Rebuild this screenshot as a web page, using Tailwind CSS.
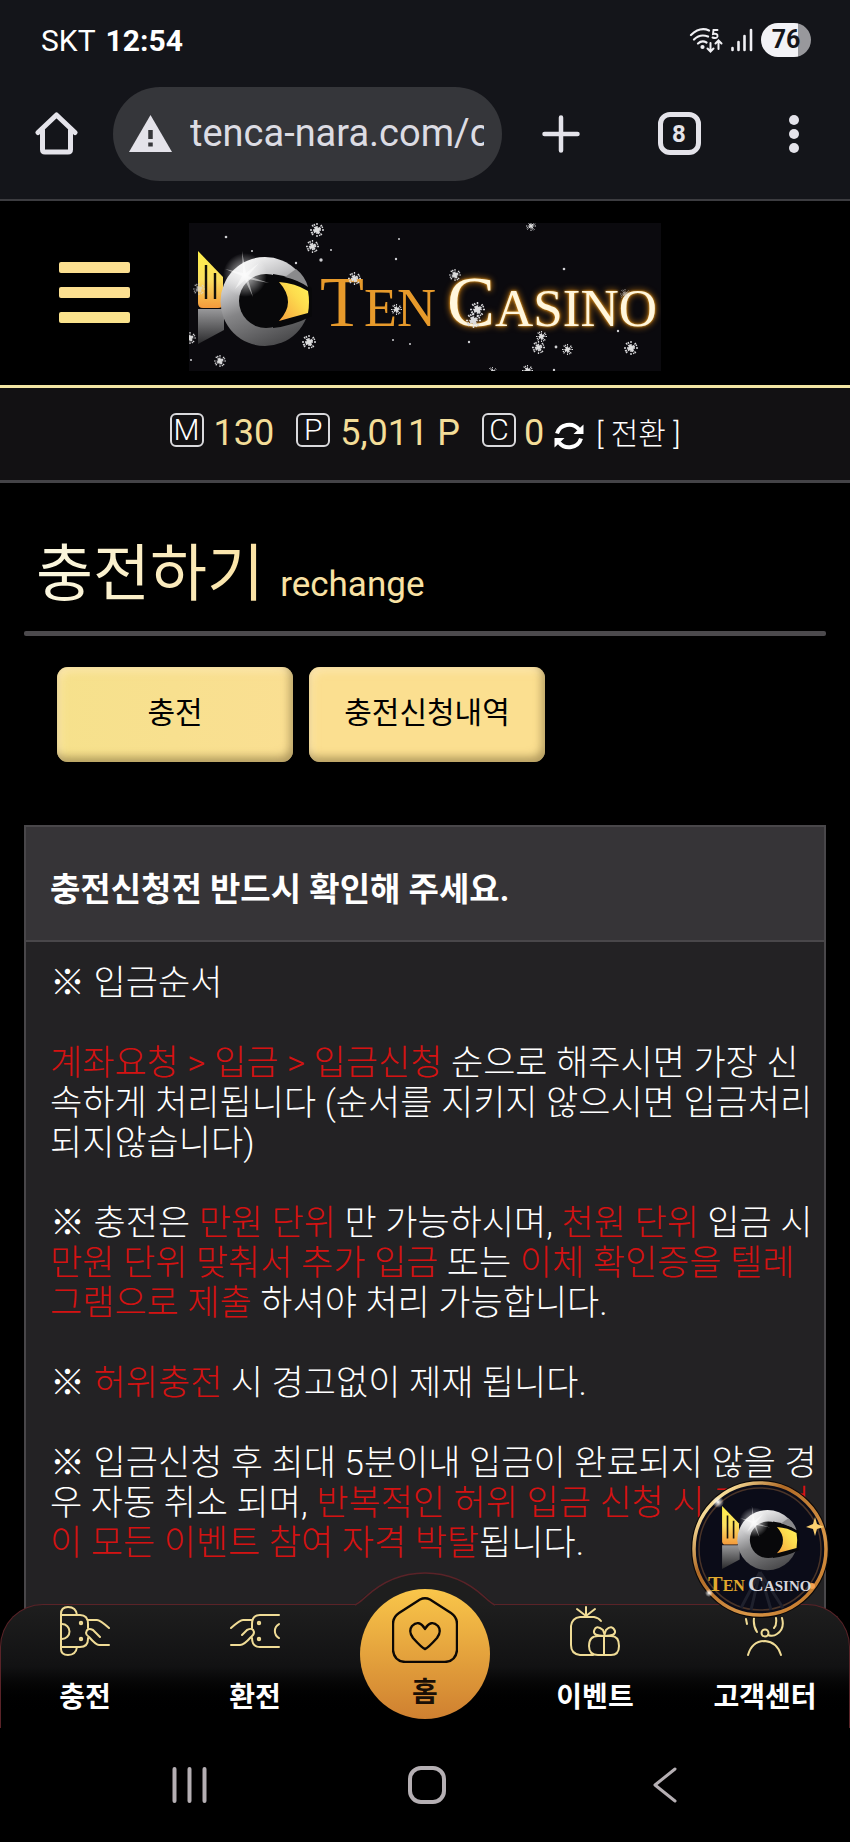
<!DOCTYPE html>
<html lang="ko">
<head>
    <meta charset="UTF-8">
    <meta name="viewport" content="width=device-width, initial-scale=1.0">
    <title>TEN CASINO - 충전하기</title>
    <script src="https://cdn.jsdelivr.net/npm/@tailwindcss/browser@4"></script>
</head>
<body class="bg-black text-white h-screen flex flex-col overflow-hidden font-['Roboto','Noto_Sans_CJK_KR',sans-serif]">

    <!-- shared drawings -->
    <svg class="absolute w-0 h-0" aria-hidden="true">
        <defs>
            <linearGradient id="wing" x1="0" y1="0" x2="0" y2="1">
                <stop offset="0" stop-color="#fff04a"/><stop offset="0.5" stop-color="#fbe060"/><stop offset="1" stop-color="#f49a3c"/>
            </linearGradient>
            <linearGradient id="ring" x1="0.2" y1="0" x2="0.6" y2="1">
                <stop offset="0" stop-color="#ffffff"/><stop offset="0.3" stop-color="#c4c4c6"/><stop offset="0.55" stop-color="#858587"/><stop offset="1" stop-color="#4a4a4c"/>
            </linearGradient>
            <linearGradient id="eye" x1="0" y1="1" x2="1" y2="0">
                <stop offset="0" stop-color="#f7a03c"/><stop offset="0.6" stop-color="#fddc4e"/><stop offset="1" stop-color="#fff45a"/>
            </linearGradient>
            <linearGradient id="tail" x1="0" y1="0" x2="0" y2="1">
                <stop offset="0" stop-color="#98989a"/><stop offset="1" stop-color="#2a2a2c"/>
            </linearGradient>
            <radialGradient id="glow">
                <stop offset="0" stop-color="#fff"/><stop offset="0.3" stop-color="#fff" stop-opacity="0.7"/><stop offset="1" stop-color="#fff" stop-opacity="0"/>
            </radialGradient>
            <linearGradient id="rim" x1="0" y1="0" x2="1" y2="1">
                <stop offset="0" stop-color="#c07a2c"/><stop offset="0.15" stop-color="#f6dc98"/><stop offset="0.35" stop-color="#b06a26"/><stop offset="0.7" stop-color="#d89648"/><stop offset="0.85" stop-color="#c98032"/><stop offset="1" stop-color="#8a4c16"/>
            </linearGradient>
            <symbol id="mark" viewBox="0 0 130 130" overflow="visible">
                <path d="M9 28 34 54V80q0 5-5 5H14q-5 0-5-5Z" fill="url(#wing)"/>
                <path d="M17 42v34M26 50v26" stroke="#14110a" stroke-width="2.4"/>
                <path d="M9 86H35V107L9 121Z" fill="url(#tail)"/>
                <circle cx="76" cy="78.500" r="44.500" fill="url(#ring)"/>
                <path d="M84 51Q103 53 123 65V93Q103 103 84 105Z" fill="#08080a"/>
                <path d="M107 46Q116 53 119 64Q109 57 96 54Z" fill="#8a8a8c"/>
                <circle cx="77" cy="78" r="27" fill="#08080a"/>
                <path d="M90 59Q106 60 119 68Q121 79 119 90Q104 94 90 98Q108 79 90 59Z" fill="url(#eye)"/>
                <circle cx="56" cy="52" r="22" fill="url(#glow)" opacity="0.8"/>
                <path d="M53 28 57 50 70 40 59 53 80 60 59 56 64 74 56 57 46 66 53 53 36 46 54 50Z" fill="#fff" opacity="0.5"/>
            </symbol>
            <symbol id="flake" viewBox="-7 -7 14 14" overflow="visible">
                <path d="M0-7V7M-7 0H7M-5-5 5 5M-5 5 5-5M-3-6 3 6M-6 3 6-3" stroke="#d8d8da" stroke-width="1.400" stroke-dasharray="2 1"/>
                <circle r="2.500" fill="#ddd"/>
            </symbol>
        </defs>
    </svg>

    <!-- status bar -->
    <div class="h-[68px] shrink-0 bg-[#14151a] pl-[41px] pr-[39px] pt-3 flex items-center justify-between">
        <div class="text-[30px] flex gap-[10px]">
            <span>SKT</span>
            <span class="font-bold">12:54</span>
        </div>
        <div class="flex items-center gap-2">
            <svg class="w-[34px] h-[26px]" viewBox="0 0 34 26" fill="none" stroke="#f0f0f4" stroke-width="2.200" stroke-linecap="round">
                <path d="M2 8Q11-.5 20 3.500M5 12.500Q11 6.500 19 9.500M9 16.500Q13 13 17.500 15.500"/>
                <circle cx="13.500" cy="20" r="1" fill="#f0f0f4"/>
                <path d="M28.500 3H24.500L24 7Q29 6 28.500 9.500Q27.500 12 23.500 10.500" stroke-width="1.900"/>
                <path d="M21.500 16V24M18.500 21.500 21.500 24.500 24.500 21.500M29.500 22V14M26.500 16.500 29.500 13.500 32.500 16.500" stroke-width="2"/>
            </svg>
            <svg class="w-[22px] h-6" viewBox="0 0 22 24" stroke="#f0f0f4" stroke-width="2.600" stroke-linecap="round">
                <path d="M1.500 20V22M7.500 14V22M13.500 8V22"/><path d="M20 2V22"/>
            </svg>
            <span class="w-[50px] h-[34px] rounded-full bg-linear-to-r from-[#f2f2f6] from-75% to-[#98989c] to-75% text-[#14151a] text-[25px] leading-[34px] font-bold text-center">76</span>
        </div>
    </div>

    <!-- browser toolbar -->
    <div class="h-[133px] shrink-0 bg-[#14151a] border-b-2 border-[#3c3c40] pl-[35px] flex items-center">
        <button type="button" aria-label="홈페이지" class="w-[43px]">
            <svg class="w-[43px] h-[43px]" viewBox="0 0 43 43" fill="none" stroke="#e4e3ea" stroke-width="5" stroke-linecap="round" stroke-linejoin="round">
                <path d="M3 20.500 21.500 3 40 20.500M7.500 18V37.500Q7.500 40 10 40H33Q35.500 40 35.500 37.500V18"/>
            </svg>
        </button>
        <div class="ml-[35px] flex-1 min-w-0 h-[94px] rounded-full bg-[#35363a] pl-4 pr-[18px] flex items-center">
            <svg class="w-[43px] h-[37px] shrink-0" viewBox="0 0 43 37">
                <path d="M21.500 0 43 37H0Z" fill="#e4e3ea"/>
                <path d="M21.500 15V24M21.500 27.500V31.500" stroke="#35363a" stroke-width="4.500"/>
            </svg>
            <input type="text" aria-label="주소" value="tenca-nara.com/c" class="ml-[18px] flex-1 min-w-0 bg-transparent text-[38px] text-[#dcdce3] outline-none">
        </div>
        <button type="button" aria-label="새 탭" class="w-[118px] flex justify-center">
            <svg class="w-[38px] h-[38px]" viewBox="0 0 38 38" stroke="#e4e3ea" stroke-width="4.500" stroke-linecap="round"><path d="M19 2.500V35.500M2.500 19H35.500"/></svg>
        </button>
        <button type="button" aria-label="탭 목록" class="w-[118px] flex justify-center">
            <span class="w-[43px] h-[43px] rounded-xl border-[5px] border-[#e4e3ea] text-[#e4e3ea] text-2xl leading-[34px] font-bold">8</span>
        </button>
        <button type="button" aria-label="더보기" class="w-28 flex justify-center">
            <svg class="w-[10px] h-[38px]" viewBox="0 0 10 38" fill="#e4e3ea"><circle cx="5" cy="5" r="5"/><circle cx="5" cy="19" r="5"/><circle cx="5" cy="33" r="5"/></svg>
        </button>
    </div>

    <!-- page -->
    <div class="relative flex-1 min-h-0 overflow-hidden">
        <header class="relative h-[187px] pt-2 border-b-[3px] border-[#f3e6a4] flex items-center justify-center">
            <button type="button" aria-label="메뉴" class="absolute left-[59px] top-[61px] w-[71px] flex flex-col gap-[14px]">
                <span class="h-[11px] rounded-xs bg-[#fbdf90]"></span>
                <span class="h-[11px] rounded-xs bg-[#fbdf90]"></span>
                <span class="h-[11px] rounded-xs bg-[#fae28c]"></span>
            </button>
            <a href="#" aria-label="TEN CASINO" class="bg-[#0b0a0e]">
                <svg class="w-[472px] h-[148px] overflow-hidden font-['Liberation_Serif',serif]" viewBox="0 0 472 148">
                    <use href="#mark" width="130" height="130"/>
                    <text x="131" y="103" font-size="54" fill="#e79a2b"><tspan font-size="72">T</tspan>EN</text>
                    <text x="258" y="103" font-size="53" fill="#fff6dc" class="[filter:drop-shadow(0_0_1px_#f5a623)_drop-shadow(0_0_3px_#c97a10)]"><tspan font-size="72">C</tspan>ASINO</text>
                    <g>
                        <use href="#flake" x="121" y="0" width="14" height="14"/>
                        <use href="#flake" x="117" y="17" width="13" height="13"/>
                        <use href="#flake" x="4" y="60" width="12" height="12" opacity="0.7"/>
                        <use href="#flake" x="159" y="49" width="13" height="13"/>
                        <use href="#flake" x="202" y="81" width="11" height="11"/>
                        <use href="#flake" x="113" y="112" width="14" height="14"/>
                        <use href="#flake" x="25" y="132" width="12" height="12"/>
                        <use href="#flake" x="-5" y="109" width="12" height="12"/>
                        <use href="#flake" x="337" y="-2" width="10" height="10"/>
                        <use href="#flake" x="260" y="46" width="12" height="12"/>
                        <use href="#flake" x="281" y="79" width="15" height="15"/>
                        <use href="#flake" x="277" y="90" width="15" height="15"/>
                        <use href="#flake" x="347" y="108" width="11" height="11"/>
                        <use href="#flake" x="343" y="118" width="13" height="13"/>
                        <use href="#flake" x="373" y="121" width="11" height="11"/>
                        <use href="#flake" x="435" y="118" width="14" height="14"/>
                        <use href="#flake" x="431" y="66" width="10" height="10" opacity="0.6"/>
                        <use href="#flake" x="333" y="142" width="11" height="11"/>
                        <use href="#flake" x="299" y="144" width="9" height="9"/>
                    </g>
                    <g fill="#cfcfd2">
                        <circle cx="37" cy="14" r="1.300"/><circle cx="63" cy="28" r="1"/><circle cx="132" cy="37" r="1.700"/><circle cx="142" cy="27" r="1"/><circle cx="107" cy="40" r="1.200"/>
                        <circle cx="207" cy="36" r="1.200"/><circle cx="210" cy="16" r="1"/><circle cx="204" cy="117" r="1"/><circle cx="221" cy="121" r="1"/><circle cx="375" cy="46" r="1.300"/>
                        <circle cx="280" cy="119" r="1.200"/><circle cx="367" cy="124" r="1.400"/><circle cx="429" cy="108" r="1.200"/><circle cx="2" cy="137" r="1"/><circle cx="365" cy="147" r="1.200"/>
                    </g>
                </svg>
            </a>
        </header>

        <!-- balances -->
        <div class="h-[95px] border-b-[3px] border-[#444347] bg-[#121113] pb-[2px] flex items-center justify-center text-[36px] text-[#f3dd98]">
            <span class="mb-[6px] w-[34px] h-[34px] rounded-md border-2 border-[#d9d9dc] text-white text-[30px] leading-[30px] font-light flex justify-center">M</span>
            <span class="ml-[10px]">130</span>
            <span class="mb-[6px] ml-[22px] w-[34px] h-[34px] rounded-md border-2 border-[#d9d9dc] text-white text-[30px] leading-[30px] font-light flex justify-center">P</span>
            <span class="ml-[10px]">5,011 P</span>
            <span class="mb-[6px] ml-[22px] w-[34px] h-[34px] rounded-md border-2 border-[#d9d9dc] text-white text-[30px] leading-[30px] font-light flex justify-center">C</span>
            <span class="ml-[8px]">0</span>
            <button type="button" class="ml-[10px] flex items-center gap-3 text-[30px] text-white font-light">
                <svg class="w-[30px] h-[30px] mt-[5px]" viewBox="0 0 30 30" fill="none" stroke="#fff" stroke-width="4">
                    <path d="M3 12.500A12.500 12 0 0 1 25 8.500M27 17.500A12.500 12 0 0 1 5 21.500"/>
                    <path d="M29.500 3.500V13H19.500ZM.500 26.500V17H10.500Z" fill="#fff" stroke="none"/>
                </svg>
                <span class="whitespace-pre">[ 전환 ]</span>
            </button>
        </div>

        <main class="px-6">
            <h1 class="pt-[52px] h-[148px] pl-3 text-[62px] leading-[80px] flex items-baseline gap-4">
                <span class="bg-linear-to-r from-[#fbf8e2] to-[#fbe2a2] bg-clip-text text-transparent">충전하기</span>
                <small class="text-[35px] text-[#f9e2a4]">rechange</small>
            </h1>
            <hr class="border-0 h-[5px] rounded-xs bg-[#4c4a4d]">

            <div class="mt-[31px] ml-[33px] flex gap-4">
                <button type="button" class="w-[236px] h-[95px] pb-1 rounded-[11px] bg-linear-to-r from-[#f6e18c] to-[#fadf92] text-black text-[30px] shadow-[inset_-3px_-5px_8px_rgba(130,110,60,0.6),inset_3px_4px_8px_rgba(255,235,190,0.7)]">충전</button>
                <button type="button" class="w-[236px] h-[95px] pb-1 rounded-[11px] bg-[#fbdf90] text-black text-[30px] shadow-[inset_-3px_-5px_8px_rgba(130,110,60,0.6),inset_3px_4px_8px_rgba(255,235,190,0.7)]">충전신청내역</button>
            </div>

            <section class="mt-[63px] border-2 border-[#49474a] bg-[#232224]">
                <h2 class="h-[115px] pt-3 px-6 border-b-2 border-[#49474a] bg-[#363437] flex items-center text-[33px] font-bold">충전신청전 반드시 확인해 주세요.</h2>
                <div class="pt-[22px] pl-6 pb-[220px] text-[35px] leading-[40px] font-light whitespace-nowrap space-y-10">
                    <p>※ 입금순서</p>
                    <p>
                        <span class="text-[#d41212]">계좌요청 &gt; 입금 &gt; 입금신청</span> 순으로 해주시면 가장 신<br>
                        속하게 처리됩니다 (순서를 지키지 않으시면 입금처리<br>
                        되지않습니다)
                    </p>
                    <p>
                        ※ 충전은 <span class="text-[#d41212]">만원 단위</span> 만 가능하시며, <span class="text-[#d41212]">천원 단위</span> 입금 시<br>
                        <span class="text-[#d41212]">만원 단위 맞춰서 추가 입금</span> 또는 <span class="text-[#d41212]">이체 확인증을 텔레<br>
                        그램으로 제출</span> 하셔야 처리 가능합니다.
                    </p>
                    <p>※ <span class="text-[#d41212]">허위충전</span> 시 경고없이 제재 됩니다.</p>
                    <p>
                        ※ 입금신청 후 최대 5분이내 입금이 완료되지 않을 경<br>
                        우 자동 취소 되며, <span class="text-[#d41212]">반복적인 허위 입금 신청 시 경고없<br>
                        이 모든 이벤트 참여 자격 박탈</span>됩니다.
                    </p>
                </div>
            </section>
        </main>

        <!-- bottom menu -->
        <nav class="absolute inset-x-0 bottom-0 h-[124px] font-['Noto_Sans_CJK_KR',sans-serif]">
            <div class="absolute inset-0 rounded-t-[43px] border border-b-0 border-[#5a2328] bg-linear-to-b from-[#1e1e1e] via-[#121213] to-black to-90%"></div>
            <svg class="absolute left-1/2 -translate-x-1/2 -top-8 w-[140px] h-[34px]" viewBox="0 0 140 34">
                <path d="M0 34V33Q31 1 70 1T140 33V34Z" fill="#1e1e1e"/>
                <path d="M0 33Q4 31 10 25.500Q36 1 70 1T130 25.500Q136 31 140 33" fill="none" stroke="#5a2328" stroke-width="1.500"/>
            </svg>
            <div class="relative h-full grid grid-cols-5 text-[28px] leading-[36px] font-bold text-center">
                <a href="#" class="flex flex-col items-center">
                    <svg class="mt-[2px] w-[50px] h-[50px]" viewBox="0 0 50 50" fill="none" stroke="#f0dc96" stroke-width="2" stroke-linecap="round" stroke-linejoin="round">
                        <path d="M1 8Q1 1 8 1Q16 1 17 9M1 8V43Q1 49 8 49Q16 49 17 41M2 9H20Q28 9 28 18V22M2 41H20Q28 41 28 33V32M2 18A7 7 0 0 1 2 33"/>
                        <path d="M28 14H37Q40 14 49 22M40 31 33 24Q27 21 26 27Q26 29 29 31Q36 39 39 39H49"/>
                        <circle cx="21" cy="17" r="1.200"/><circle cx="21" cy="33" r="1.200"/>
                    </svg>
                    <span class="mt-[21px]">충전</span>
                </a>
                <a href="#" class="flex flex-col items-center">
                    <svg class="mt-[2px] w-[50px] h-[50px]" viewBox="0 0 50 50" fill="none" stroke="#f0dc96" stroke-width="2" stroke-linecap="round" stroke-linejoin="round">
                        <path d="M49 9H30Q22 9 22 18V22M22 32Q22 41 30 41H49M49 18A8 8 0 0 0 49 32"/>
                        <path d="M22 14H13Q10 14 1 22M12 29 17 24Q23 21 24 26Q24 29 21 31Q14 39 10 39H1"/>
                        <circle cx="29" cy="17" r="1.200"/><circle cx="29" cy="33" r="1.200"/>
                    </svg>
                    <span class="mt-[21px]">환전</span>
                </a>
                <a href="#" class="justify-self-center -mt-[15px] w-[130px] h-[130px] rounded-full bg-linear-to-b from-[#f9c64a] to-[#cf8030] text-[#1a0f06] flex flex-col items-center">
                    <svg class="mt-2 w-[66px] h-[66px]" viewBox="0 0 66 66" fill="none" stroke="#0c0805" stroke-width="2.400" stroke-linejoin="round">
                        <path d="M28 2.500Q33 0 38 2.500L59 16Q65 20 65 27V53Q64 64 53 65H13Q2 64 1 53V27Q1 20 7 16Z"/>
                        <path d="M33 52Q30 51 21 41Q16 34 20 29Q27 22 33 32Q39 22 46 29Q50 34 45 41Q36 51 33 52Z"/>
                    </svg>
                    <span class="mt-[9px]">홈</span>
                </a>
                <a href="#" class="flex flex-col items-center">
                    <svg class="mt-[2px] w-[50px] h-[50px]" viewBox="0 0 50 50" fill="none" stroke="#f0dc96" stroke-width="2" stroke-linecap="round" stroke-linejoin="round">
                        <path d="M23 49H10Q1 48 1 39V20Q2 12 10 11H24Q29 12 31 15M16 10V1M16 10 7 3M16 10 25 3"/>
                        <path d="M28 30H41Q49 30 49 40Q49 49 41 49H28Q19 49 19 40Q19 30 28 30ZM34 30V49M34 30Q23 30 24 25Q26 18 33 24L35 30Q46 30 45 25Q42 18 36 24Z"/>
                    </svg>
                    <span class="mt-[21px]">이벤트</span>
                </a>
                <a href="#" class="flex flex-col items-center">
                    <svg class="mt-[2px] w-[50px] h-[50px]" viewBox="0 0 50 50" fill="none" stroke="#f0dc96" stroke-width="2" stroke-linecap="round" stroke-linejoin="round">
                        <path d="M8 49Q12 35 25 35Q37 36 41 49M7 18 6 13M14 12Q13 20 17 26M36 12Q37 19 34 22M42 12Q45 23 37 28Q33 31 28 29"/>
                        <circle cx="25" cy="27" r="3.500"/>
                    </svg>
                    <span class="mt-[21px]">고객센터</span>
                </a>
            </div>
        </nav>

        <!-- floating badge -->
        <a href="#" aria-label="TEN CASINO" class="absolute right-[21px] bottom-[110px]">
            <svg class="w-[138px] h-[138px] font-['Liberation_Serif',serif]" viewBox="0 0 138 138">
                <circle cx="69" cy="69" r="69" fill="#0a0808"/>
                <circle cx="69" cy="69" r="66" fill="#0b0c18" stroke="url(#rim)" stroke-width="3.500"/>
                <circle cx="69" cy="69" r="61" fill="none" stroke="#4a3428" stroke-width="1.500"/>
                <path d="M69 92 50 128M69 92 60 130M69 92 80 130M69 92 92 128" stroke="#1f212d" stroke-width="3"/>
                <use href="#mark" x="25" y="7" width="88" height="88"/>
                <path d="M124 37 126 44 133 47 126 49 124 56 122 49 115 47 122 44Z" fill="#fbd070"/>
                <circle cx="27" cy="22" r="6" fill="url(#glow)"/>
                <circle cx="18" cy="113" r="4" fill="url(#glow)"/>
                <circle cx="121" cy="106" r="3" fill="#f6a050"/>
                <text x="17" y="111" font-size="16" font-weight="bold" fill="#e0a92e"><tspan font-size="22">T</tspan>EN</text>
                <text x="57" y="111" font-size="15" font-weight="bold" fill="#d6d6dc"><tspan font-size="22">C</tspan>ASINO</text>
            </svg>
        </a>
    </div>

    <!-- system navigation -->
    <div class="h-[114px] shrink-0 bg-black grid grid-cols-[1fr_100px_1fr] items-center pb-[1px]">
        <button type="button" aria-label="최근 앱" class="justify-self-end mr-[168px]">
            <svg class="w-[35px] h-9" viewBox="0 0 35 36" stroke="#b5afb3" stroke-width="4" stroke-linecap="round"><path d="M2.500 2V34M17.500 2V34M32.500 2V34"/></svg>
        </button>
        <button type="button" aria-label="홈" class="justify-self-center">
            <span class="block w-[38px] h-[38px] ml-1 rounded-[13px] border-4 border-[#b5afb3]"></span>
        </button>
        <button type="button" aria-label="뒤로" class="justify-self-start ml-[178px]">
            <svg class="w-6 h-9" viewBox="0 0 24 36" fill="none" stroke="#b5afb3" stroke-width="3" stroke-linecap="round" stroke-linejoin="round"><path d="M22 2 2 18 22 34"/></svg>
        </button>
    </div>
</body>
</html>
